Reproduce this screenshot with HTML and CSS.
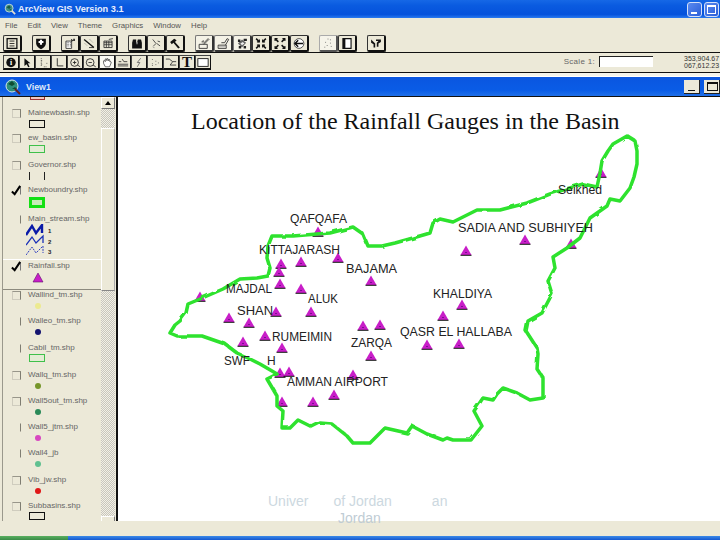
FILE: index.html
```html
<!DOCTYPE html>
<html lang="en">
<head>
<meta charset="utf-8">
<title>ArcView GIS Version 3.1</title>
<link rel="stylesheet" href="styles.css">
</head>
<body>
<div class="page">
  <header class="app-title">
    <svg class="app-logo" viewBox="0 0 14 14"><circle cx="6" cy="6" r="4.6" fill="#3f8f8a" stroke="#cfe0e0"/><path d="M3 5l3-2 2 2-2 2zM6 8l2-1 1 2z" fill="#1c5a40"/><path d="M9 9l4 4" stroke="#e6e0d0" stroke-width="2"/></svg>
    <span class="app-name">ArcView GIS Version 3.1</span>
    <span class="xp-btn"><i class="xp-min"></i></span>
    <span class="xp-btn"><i class="xp-max"></i></span>
  </header>
  <nav class="menubar">
    <span>File</span><span>Edit</span><span>View</span><span>Theme</span><span>Graphics</span><span>Window</span><span>Help</span>
  </nav>
  <div class="toolbar toolbar-main">
    <button class="tb"><svg viewBox="0 0 16 16"><rect x="2" y="2" width="12" height="12" fill="none" stroke="#111" stroke-width="1.6"/><path d="M5 5h6M5 8h6M5 11h6" stroke="#111"/></svg></button>
    <button class="tb tb-sep"><svg viewBox="0 0 16 16"><path d="M2 2h12v6q0 4-6 7-6-3-6-7z" fill="#111"/><path d="M8 3.5v6M5 6.200h6" stroke="#fff" stroke-width="2.600"/></svg></button>
    <button class="tb tb-sep"><svg viewBox="0 0 16 16"><path d="M3 5h7v9H3z" fill="#fff" stroke="#222"/><path d="M4 7h5M4 9h5M4 11h5" stroke="#333" stroke-dasharray="1 1"/><path d="M9 2l3 2-2 2z M12 2h2v3h-2z" fill="#222"/></svg></button>
    <button class="tb"><svg viewBox="0 0 16 16"><path d="M2 3l12 10" stroke="#111" stroke-width="1.600"/><path d="M3 8l3 3M9 3l4 4" stroke="#666" stroke-dasharray="1 1"/><path d="M8 13h6" stroke="#222"/></svg></button>
    <button class="tb"><svg viewBox="0 0 16 16"><path d="M3 5h10v8H3z" fill="none" stroke="#222"/><path d="M3 7h10M3 9.500h10M6 5v8M9 5v8" stroke="#333"/><path d="M9 3l5-1" stroke="#222"/></svg></button>
    <button class="tb tb-sep"><svg viewBox="0 0 16 16"><path d="M3 3h4v3l1 1v7H2V7zM9 3h4l1 4v7H8V7z" fill="#111"/><path d="M7.500 6h1v3h-1z" fill="#eee"/></svg></button>
    <button class="tb"><svg viewBox="0 0 16 16"><path d="M4 3l4 5-3 3M9 8l4 3M10 5l3 1" fill="none" stroke="#333"/><path d="M4 12l2 1" stroke="#777"/></svg></button>
    <button class="tb"><svg viewBox="0 0 16 16"><path d="M2 6l5-4 3 2-2 2 6 7-2 1-6-7-2 2z" fill="#111"/></svg></button>
    <button class="tb tb-sep tb-flat"><svg viewBox="0 0 16 16"><path d="M2 9h10v5H2z" fill="none" stroke="#222"/><path d="M7 8l6-6 1 1-6 6M5 6h2V4" fill="none" stroke="#222"/></svg></button>
    <button class="tb tb-flat"><svg viewBox="0 0 16 16"><path d="M2 10h10v4H2z" fill="none" stroke="#222"/><path d="M6 7h4l3-5 2 1-4 7" fill="none" stroke="#222"/><path d="M2 12h10" stroke="#999"/></svg></button>
    <button class="tb tb-flat"><svg viewBox="0 0 16 16"><path d="M3 8l5-5 5 4-5 6z" fill="#666"/><path d="M3 3h3v3H3zM10 2h4v3h-4zM10 11h3v3h-3zM4 11h3v3H4z" fill="#222"/><path d="M6 8l3-2 2 2-3 2z" fill="#eee"/></svg></button>
    <button class="tb"><svg viewBox="0 0 16 16"><path d="M2 2l4 4M14 2l-4 4M2 14l4-4M14 14l-4-4" stroke="#111" stroke-width="1.800"/><path d="M6 3v3H3M10 3v3h3M6 13v-3H3M10 13v-3h3" fill="none" stroke="#111" stroke-width="1.400"/></svg></button>
    <button class="tb"><svg viewBox="0 0 16 16"><path d="M6 6L2 2M10 6l4-4M6 10l-4 4M10 10l4 4" stroke="#111" stroke-width="1.800"/><path d="M2 5V2h3M14 5V2h-3M2 11v3h3M14 11v3h-3" fill="none" stroke="#111" stroke-width="1.400"/></svg></button>
    <button class="tb"><svg viewBox="0 0 16 16"><circle cx="8" cy="8" r="6" fill="#fff" stroke="#333"/><path d="M3 8h10M7 4L3 8l4 4" fill="none" stroke="#111" stroke-width="1.800"/></svg></button>
    <button class="tb tb-sep tb-dither"><svg viewBox="0 0 16 16"><path d="M8 2v2M11 3v2M5 6v2M11 7v2M7 10v2M12 11v2M4 12v2" stroke="#555" stroke-dasharray="1 1"/></svg></button>
    <button class="tb"><svg viewBox="0 0 16 16"><path d="M3 2h10v12H3z" fill="#fff" stroke="#111" stroke-width="1.400"/><path d="M3 2h3v12H3z" fill="#111"/></svg></button>
    <button class="tb tb-sep"><svg viewBox="0 0 16 16"><path d="M2 3l5 5v5H5V9L2 7zM8 3h6v3l-3 2v4H9V7l2-2H8z" fill="#111"/></svg></button>
  </div>
  <div class="toolbar toolbar-tools">
    <button class="tt"><svg viewBox="0 0 14 12"><circle cx="7" cy="6" r="5.500" fill="#111"/><text class="ico-i" x="7" y="9.500">i</text></svg></button>
    <button class="tt"><svg viewBox="0 0 14 12"><path d="M4 1l7 6H8l2 4-1.500.6L6.500 8 4 10z" fill="#111"/></svg></button>
    <button class="tt"><svg viewBox="0 0 14 12"><path d="M5 1v10M5 4h2M5 8h2M8 11h4M11 7h1" stroke="#444" stroke-dasharray="1 1"/></svg></button>
    <button class="tt"><svg viewBox="0 0 14 12"><path d="M5 1v9h7" fill="none" stroke="#222"/></svg></button>
    <button class="tt"><svg viewBox="0 0 14 12"><circle cx="6.500" cy="6" r="4.500" fill="none" stroke="#222"/><path d="M4.500 6h4M6.500 4v4M10 9l3 2" stroke="#222"/></svg></button>
    <button class="tt"><svg viewBox="0 0 14 12"><circle cx="6" cy="6" r="4.500" fill="none" stroke="#222"/><path d="M4 6h4M9.500 9l3 2" stroke="#222"/></svg></button>
    <button class="tt tt-lit"><svg viewBox="0 0 14 12"><path d="M3 7V4l1-.5L5 5V2l1-.5L7 4V1.500l1 0L9 4V2.500l1 0 .5 3 1-.5.5 1-2 5H5z" fill="#fff" stroke="#333" stroke-width=".8"/></svg></button>
    <button class="tt"><svg viewBox="0 0 14 12"><path d="M1 8h12M1 10h12M2 5h3M6 2l2 3h4" fill="none" stroke="#333"/></svg></button>
    <button class="tt"><svg viewBox="0 0 14 12"><path d="M9 1L5 6h3l-3 5" fill="none" stroke="#666"/></svg></button>
    <button class="tt"><svg viewBox="0 0 14 12"><path d="M4 2v2M8 4v2M4 7v3M8 8v2M11 6v2" stroke="#555" stroke-dasharray="1 1"/></svg></button>
    <button class="tt"><svg viewBox="0 0 14 12"><path d="M1 2h4l4 3h4M9 5l-3 4h7" fill="none" stroke="#333"/></svg></button>
    <button class="tt tt-text">T</button>
    <button class="tt"><svg viewBox="0 0 14 12"><rect x="1" y="1.500" width="12" height="9" fill="#fff" stroke="#111"/></svg></button>
    <div class="scale"><span class="scale-label">Scale 1:</span><span class="scale-input"></span></div>
    <div class="coords"><span>353,904.67</span><span>067,612.23</span></div>
  </div>
  <div class="gap"></div>
  <section class="view">
    <header class="view-title">
      <svg class="view-logo" viewBox="0 0 16 16"><circle cx="7" cy="7" r="6" fill="#2e8f7a" stroke="#d7e6e6"/><path d="M3 5l4-3 3 3-3 2zM7 10l3-2 2 2z" fill="#0f4d30"/><path d="M10 10l5 5" stroke="#602020" stroke-width="2"/></svg>
      <span class="view-name">View1</span>
      <span class="view-btn"><i class="view-min"></i></span>
      <span class="view-btn"><i class="view-max"></i></span>
    </header>
    <div class="view-body">
      <aside class="toc">
        <div class="legend">
          <div class="theme theme-cut"><span class="swatch-cut"></span></div>
          <div class="theme h25"><span class="cb"></span><div class="th"><span class="lbl">Mainewbasin.shp</span><span class="sw sw-black"></span></div></div>
          <div class="theme h27"><span class="cb"></span><div class="th"><span class="lbl">ew_basin.shp</span><span class="sw sw-green"></span></div></div>
          <div class="theme h25"><span class="cb"></span><div class="th"><span class="lbl">Governor.shp</span><span class="sw sw-bars"></span></div></div>
          <div class="theme h29"><span class="cb cb-on"><svg viewBox="0 0 12 12"><path d="M1 7l3 3 6-9" fill="none" stroke="#000" stroke-width="2.200"/></svg></span><div class="th"><span class="lbl">Newboundry.shp</span><span class="sw sw-bold"></span></div></div>
          <div class="theme h45"><span class="cb cb-faint"></span><div class="th"><span class="lbl">Main_stream.shp</span>
            <svg class="streams" viewBox="0 0 28 32"><path d="M0 11L6 2l4 7 6-8v8" fill="none" stroke="#0a1aa8" stroke-width="2.400"/><path d="M0 21l6-8 4 6 7-7v7" fill="none" stroke="#1a30b8" stroke-width="1.300"/><path d="M0 31l6-8 4 6 7-7v7" fill="none" stroke="#3040c0" stroke-dasharray="2 1"/><text class="st" x="22" y="9">1</text><text class="st" x="22" y="20">2</text><text class="st" x="22" y="30">3</text></svg></div></div>
          <div class="theme h32 theme-active"><span class="cb cb-on"><svg viewBox="0 0 12 12"><path d="M1 7l3 3 6-9" fill="none" stroke="#000" stroke-width="2.200"/></svg></span><div class="th"><span class="lbl">Rainfall.shp</span><svg class="tri" viewBox="0 0 12 11"><path d="M6 1l5 9H1z" fill="#c81ec8" stroke="#60106a" stroke-width=".6"/></svg></div></div>
          <div class="theme"><span class="cb"></span><div class="th"><span class="lbl">Wallind_tm.shp</span><span class="dot dot-yellow"></span></div></div>
          <div class="theme h27"><span class="cb cb-faint"></span><div class="th"><span class="lbl">Walleo_tm.shp</span><span class="dot dot-navy"></span></div></div>
          <div class="theme h27"><span class="cb cb-faint"></span><div class="th"><span class="lbl">Cabil_tm.shp</span><span class="sw sw-green sw-low"></span></div></div>
          <div class="theme"><span class="cb"></span><div class="th"><span class="lbl">Wallq_tm.shp</span><span class="dot dot-olive"></span></div></div>
          <div class="theme"><span class="cb"></span><div class="th"><span class="lbl">Wall5out_tm.shp</span><span class="dot dot-teal"></span></div></div>
          <div class="theme"><span class="cb cb-faint"></span><div class="th"><span class="lbl">Wall5_jtm.shp</span><span class="dot dot-pink"></span></div></div>
          <div class="theme h27"><span class="cb cb-faint"></span><div class="th"><span class="lbl">Wall4_jb</span><span class="dot dot-mint"></span></div></div>
          <div class="theme"><span class="cb"></span><div class="th"><span class="lbl">Vib_jw.shp</span><span class="dot dot-red"></span></div></div>
          <div class="theme"><span class="cb"></span><div class="th"><span class="lbl">Subbasins.shp</span><span class="sw sw-black sw-low"></span></div></div>
        </div>
        <div class="scrollbar">
          <span class="sb-btn"><i class="sb-up"></i></span>
          <span class="sb-track sb-a"></span>
          <span class="sb-thumb"></span>
          <span class="sb-track sb-b"></span>
          <span class="sb-btn sb-end"></span>
        </div>
      </aside>
      <main class="map">
        <svg class="map-svg" viewBox="118 96 602 424">
          <defs>
            <g id="gauge"><path d="M0-9.500L5.500 0h-11z" fill="#c81ec8"/><path d="M-5.500 .3h11" stroke="#111" stroke-width="1"/><path d="M-1-3h2v1h-2z" fill="#7a1090"/></g>
            <filter id="wobble" x="-5%" y="-5%" width="110%" height="110%" filterUnits="objectBoundingBox"><feTurbulence type="fractalNoise" baseFrequency="0.1" numOctaves="1" seed="4"/><feDisplacementMap in="SourceGraphic" scale="3"/></filter>
          </defs>
          <g>
            <use href="#gauge" x="200" y="300"/><use href="#gauge" x="318" y="235"/><use href="#gauge" x="281" y="267"/><use href="#gauge" x="301" y="265"/>
            <use href="#gauge" x="338" y="261"/><use href="#gauge" x="279" y="275"/><use href="#gauge" x="280" y="287"/><use href="#gauge" x="301" y="292"/>
            <use href="#gauge" x="371" y="284"/><use href="#gauge" x="276" y="315"/><use href="#gauge" x="311" y="315"/><use href="#gauge" x="229" y="321"/>
            <use href="#gauge" x="249" y="326"/><use href="#gauge" x="363" y="329"/><use href="#gauge" x="380" y="328"/><use href="#gauge" x="265" y="339"/>
            <use href="#gauge" x="243" y="345"/><use href="#gauge" x="282" y="351"/><use href="#gauge" x="371" y="359"/><use href="#gauge" x="427" y="348"/>
            <use href="#gauge" x="280" y="376"/><use href="#gauge" x="289" y="375"/><use href="#gauge" x="353" y="378"/><use href="#gauge" x="334" y="398"/>
            <use href="#gauge" x="282" y="405"/><use href="#gauge" x="313" y="405"/><use href="#gauge" x="601" y="176"/><use href="#gauge" x="525" y="243"/>
            <use href="#gauge" x="466" y="254"/><use href="#gauge" x="571" y="247"/><use href="#gauge" x="462" y="308"/><use href="#gauge" x="443" y="319"/>
            <use href="#gauge" x="459" y="347"/>
          </g>
          <polygon class="boundary" filter="url(#wobble)" points="170,332 175,324 180,320 186,312 188,303 200,298 223,288 240,278 257,277 268,275 270,267 267,257 268,245 272,235 293,235 317,233 330,232 353,226 363,233 368,245 382,245 395,242 413,237 430,232 433,222 440,218 453,221 477,209 500,209 527,202 550,193 583,183 597,186 600,172 602,160 608,150 613,143 627,135 635,140 637,150 637,163 634,176 630,187 620,200 610,198 607,205 590,217 580,237 567,247 553,256 555,267 548,280 552,293 542,312 528,320 526,330 537,347 538,353 537,368 543,377 543,397 530,399 517,392 503,387 497,393 493,399 483,397 474,410 482,425 471,439 453,439 447,437 443,439 427,433 412,425 407,432 385,427 370,442 353,442 347,435 332,423 320,422 312,426 298,419 290,427 282,427 283,410 277,405 277,395 267,378 277,373 272,370 260,363 250,358 237,352 225,343 202,335 177,335"/>
          <g class="labels">
            <text x="290" y="222" textLength="57" lengthAdjust="spacingAndGlyphs">QAFQAFA</text>
            <text x="259" y="253" textLength="81" lengthAdjust="spacingAndGlyphs">KITTAJARASH</text>
            <text x="346" y="272" textLength="51" lengthAdjust="spacingAndGlyphs">BAJAMA</text>
            <text x="226" y="292" textLength="46" lengthAdjust="spacingAndGlyphs">MAJDAL</text>
            <text x="308" y="302" textLength="30" lengthAdjust="spacingAndGlyphs">ALUK</text>
            <text x="237" y="314" textLength="36" lengthAdjust="spacingAndGlyphs">SHAN</text>
            <text x="272" y="340" textLength="60" lengthAdjust="spacingAndGlyphs">RUMEIMIN</text>
            <text x="351" y="346" textLength="41" lengthAdjust="spacingAndGlyphs">ZARQA</text>
            <text x="224" y="364" textLength="26" lengthAdjust="spacingAndGlyphs">SWF</text>
            <text x="267" y="364">H</text>
            <text x="287" y="385" textLength="101" lengthAdjust="spacingAndGlyphs">AMMAN AIRPORT</text>
            <text x="400" y="335" textLength="112" lengthAdjust="spacingAndGlyphs">QASR EL HALLABA</text>
            <text x="433" y="297" textLength="59" lengthAdjust="spacingAndGlyphs">KHALDIYA</text>
            <text x="458" y="231" textLength="135" lengthAdjust="spacingAndGlyphs">SADIA AND SUBHIYEH</text>
            <text x="558" y="193" textLength="44" lengthAdjust="spacingAndGlyphs">Seikhed</text>
          </g>
        </svg>
      </main>
    </div>
  </section>
  <footer class="statusbar"></footer>
  <div class="taskbar"><span class="task-start"></span></div>
  <h1 class="slide-title">Location of the Rainfall Gauges in the Basin</h1>
  <div class="slide-foot">
    <div class="foot-line"><span>Univer</span><span class="foot-b">of Jordan</span><span class="foot-c">an</span></div>
    <div class="foot-second">Jordan</div>
  </div>
</div>
</body>
</html>
```
FILE: styles.css
```css
* { box-sizing: border-box; }
html, body { margin: 0; padding: 0; }
body { width: 720px; height: 540px; overflow: hidden; background: #ece9d8; font-family: "Liberation Sans", Arial, sans-serif; }
.page { position: relative; width: 720px; height: 540px; display: flex; flex-direction: column; overflow: hidden; background: #ece9d8; }

.app-title { height: 18px; display: flex; align-items: center; padding: 0 1px 0 4px; gap: 2px; background: linear-gradient(#1668e6, #0a5be0 30%, #0552dc 80%, #2a7af0); }
.app-logo { width: 12px; height: 12px; }
.app-name { margin-right: auto; color: #e8eefc; font-size: 9.2px; font-weight: bold; white-space: nowrap; }
.xp-btn { width: 15px; height: 15px; border: 1px solid #d4e0f8; border-radius: 3px; background: linear-gradient(135deg, #5a8af0, #2a5ed8); display: flex; position: relative; }
.xp-min { position: absolute; left: 3px; bottom: 2px; width: 6px; height: 2px; background: #fff; }
.xp-max { position: absolute; left: 2px; top: 2px; width: 9px; height: 9px; border: 1px solid #fff; border-top-width: 2px; }

.menubar { height: 14px; display: flex; align-items: center; gap: 10px; padding-left: 5px; font-size: 7.8px; color: #555; }

.toolbar { display: flex; }
.toolbar-main { height: 21px; padding: 3px 0 0 3px; border-bottom: 1px solid #111; align-items: flex-start; }
.toolbar-tools { height: 20px; padding: 2px 0 0 3px; border-bottom: 1px solid #111; align-items: flex-start; }
.tb { width: 19px; height: 17px; padding: 0; display: flex; align-items: center; justify-content: center; background: #ece9d8; border: 1px solid #333; border-right: 2px solid #111; border-bottom: 2px solid #111; border-radius: 2px; }
.tb svg { width: 14px; height: 13px; }
.tb-sep { margin-left: 10px; }
.tb-flat { background: #f4f2e6; border-color: #777; border-right-color: #333; border-bottom-color: #333; }
.tb-dither { background: #f6f4ea; border-color: #aaa; border-right-color: #555; border-bottom-color: #555; }
.tt { width: 16px; height: 15px; padding: 0; display: flex; align-items: center; justify-content: center; background: #ece9d8; border: 1px solid #444; border-right-color: #111; border-bottom: 2px solid #111; }
.tt svg { width: 12px; height: 11px; }
.tt-lit { background: #fafaf4; }
.tt-text { font: bold 15px/12px "Liberation Serif", serif; color: #111; }
.ico-i { font: bold 9px "Liberation Serif", serif; fill: #fff; text-anchor: middle; }

.scale { margin-left: auto; display: flex; align-items: center; gap: 4px; height: 12px; }
.scale-label { font-size: 8px; color: #666; letter-spacing: .3px; }
.scale-input { width: 54px; height: 11px; background: #fff; border-left: 1px solid #222; border-top: 1px solid #222; }
.coords { width: 36px; margin-left: 31px; display: flex; flex-direction: column; font-size: 7px; line-height: 7px; color: #333; white-space: nowrap; }

.gap { height: 4px; border-bottom: 1px solid #fff; background: #f4f3ea; }

.view { display: flex; flex-direction: column; }
.view-title { height: 19px; display: flex; align-items: center; padding-left: 5px; gap: 4px; background: linear-gradient(#0a56e0, #0a5ce6 70%, #2070e8); }
.view-logo { width: 16px; height: 16px; }
.view-name { margin-right: auto; margin-left: 1px; color: #dfe8f8; font-size: 8.8px; font-weight: bold; }
.view-btn { width: 16px; height: 14px; margin: 0; background: #ece9d8; border-right: 1px solid #222; border-bottom: 1px solid #222; position: relative; }
.view-min { position: absolute; left: 4px; bottom: 2px; width: 7px; height: 1px; background: #111; }
.view-max { position: absolute; left: 3px; top: 2px; width: 11px; height: 9px; border: 1px solid #111; border-top-width: 2px; }

.view-body { height: 425px; display: flex; border-top: 1px solid #111; }
.toc { width: 118px; flex: none; display: flex; border-left: 2px solid #ece9d8; border-right: 2px solid #111; overflow: hidden; }
.legend { width: 99px; flex: none; display: flex; flex-direction: column; border-left: 1px solid #9a988c; overflow: hidden; }
.theme { flex: none; height: 26px; display: flex; padding-left: 9px; gap: 7px; }
.theme-cut { height: 11px; padding-left: 27px; }
.swatch-cut { width: 15px; height: 3px; background: #f0c8c0; border: 1px solid #a03030; border-top: 0; }
.h25 { height: 25px; }
.h27 { height: 27px; }
.h29 { height: 29px; }
.h32 { height: 32px; }
.h45 { height: 45px; }
.theme-active { border-top: 1px solid #fff; border-bottom: 1px solid #8c8a7e; margin-right: -1px; padding-top: 1px; height: 31px; }
.cb { width: 9px; height: 9px; margin-top: 1px; flex: none; border: 1px solid #cfccbe; border-top-color: #98968a; border-right-color: #7f7d72; }
.cb-faint { border-color: transparent; border-right-color: #7f7d72; }
.cb-on { border-color: transparent; border-right-color: #777; position: relative; }
.cb-on svg { position: absolute; left: -2px; top: -2px; width: 11px; height: 11px; }
.th { display: flex; flex-direction: column; align-items: flex-start; }
.lbl { font-size: 8px; line-height: 10px; color: #666; white-space: nowrap; }
.sw { width: 16px; height: 8px; margin-top: 2px; margin-left: 1px; flex: none; }
.sw-low { margin-top: 1px; }
.sw-black { border: 1px solid #111; }
.sw-green { border: 1px solid #3fc04a; background: #e4ecd4; }
.sw-bars { border-left: 1px solid #222; border-right: 1px solid #222; }
.sw-bold { border: 3px solid #14e014; background: #c8ecb8; height: 11px; }
.streams { width: 28px; height: 32px; margin-left: -2px; }
.st { font: bold 6px "Liberation Sans", sans-serif; fill: #222; }
.tri { width: 12px; height: 11px; margin: 1px 0 0 4px; }
.dot { width: 6px; height: 6px; margin: 3px 0 0 7px; border-radius: 50%; }
.dot-yellow { background: #ecea90; }
.dot-navy { background: #141470; }
.dot-olive { background: #76962a; }
.dot-teal { background: #2a8a58; }
.dot-pink { background: #d848c0; }
.dot-mint { background: #60c090; }
.dot-red { background: #e01818; }

.scrollbar { width: 14px; flex: none; display: flex; flex-direction: column; }
.sb-btn { height: 12px; flex: none; background: #ece9d8; border-top: 1px solid #fff; border-left: 1px solid #fff; border-right: 1px solid #777; border-bottom: 1px solid #777; display: flex; align-items: center; justify-content: center; }
.sb-up { width: 0; height: 0; border-left: 3px solid transparent; border-right: 3px solid transparent; border-bottom: 4px solid #000; }
.sb-end { height: 5px; border-bottom: 0; }
.sb-track { flex: none; background-color: #ece9d8; background-image: repeating-conic-gradient(#c8c6bc 0 25%, #f2f0e6 0 50%); background-size: 2px 2px; }
.sb-a { height: 19px; }
.sb-b { flex: 1; }
.sb-thumb { height: 163px; flex: none; background: #ece9d8; border-top: 1px solid #fff; border-left: 1px solid #fff; border-right: 1px solid #aaa; border-bottom: 1px solid #888; }

.map { flex: 1; background: #fff; overflow: hidden; }
.map-svg { display: block; width: 602px; height: 424px; }
.boundary { fill: none; stroke: #2de22d; stroke-width: 3.5; stroke-linejoin: round; }
.labels text { font-size: 12px; fill: #222; }

.statusbar { height: 15px; background: #ece9d8; }
.taskbar { flex: 1; display: flex; background: linear-gradient(#3a8ae8, #1458d0); }
.task-start { width: 68px; background: linear-gradient(#5ab060, #3a8a48); }

.slide-title { position: absolute; left: 191px; top: 107px; margin: 0; font: 400 24px/28px "Liberation Serif", serif; color: #111; white-space: nowrap; }
.slide-foot { position: absolute; left: 268px; top: 493px; width: 184px; font-size: 14px; line-height: 17px; color: #ccd8e0; }
.foot-line { display: flex; }
.foot-b { margin-left: 25px; }
.foot-c { margin-left: 40px; }
.foot-second { margin-left: 70px; color: #c0ccd4; }
```
